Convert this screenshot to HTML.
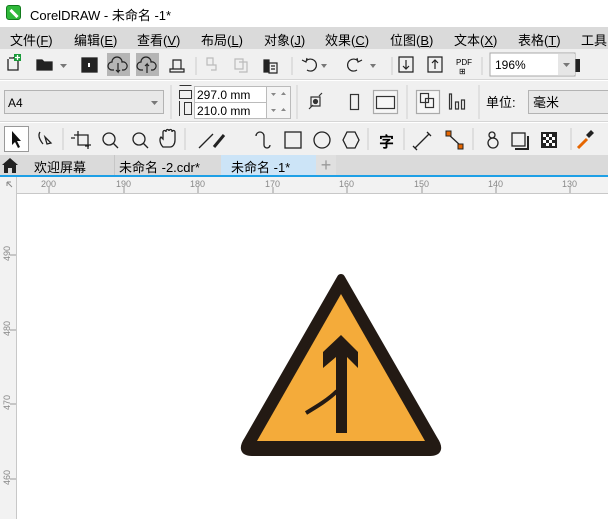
<!DOCTYPE html>
<html><head><meta charset="utf-8"><style>
*{margin:0;padding:0;box-sizing:border-box}
body{width:608px;height:519px;overflow:hidden;background:#fff;font-family:"Liberation Sans","Noto Sans CJK SC",sans-serif;position:relative;font-size:12px;color:#000}
.a{position:absolute}
.menu span{position:absolute;top:3px;font-size:13px}
.ic{position:absolute}
</style></head><body>
<!-- title -->
<div class="a" style="left:6px;top:5px;width:15px;height:15px;background:#2fb83a;border-radius:3px;border:1px solid #117a1c"></div>
<div class="a" style="left:9px;top:12px;width:10px;height:3px;background:#fff;transform:rotate(45deg)"></div>
<div class="a" style="left:30px;top:5px;font-size:13px">CorelDRAW - 未命名 -1*</div>
<!-- menu -->
<div class="a menu" style="left:0;top:27px;width:608px;height:22px;background:#dadada">
<span style="left:10px">文件(<u>F</u>)</span><span style="left:74px">编辑(<u>E</u>)</span><span style="left:137px">查看(<u>V</u>)</span><span style="left:201px">布局(<u>L</u>)</span><span style="left:264px">对象(<u>J</u>)</span><span style="left:325px">效果(<u>C</u>)</span><span style="left:390px">位图(<u>B</u>)</span><span style="left:454px">文本(<u>X</u>)</span><span style="left:518px">表格(<u>T</u>)</span><span style="left:581px">工具</span>
</div>
<!-- toolbar -->
<div class="a" style="left:0;top:49px;width:608px;height:31px;background:#f0f0f0;border-bottom:1px solid #d6d6d6"></div>
<svg class="a" style="left:0;top:49px" width="608" height="31">
<g fill="none" stroke="#222" stroke-width="1.3">
<path d="M9 9h5v-1M8 10v11h10v-10"/><rect x="14" y="5" width="7" height="7" fill="#1a9c3a" stroke="none"/><path d="M17.5 6v5M15 8.5h5" stroke="#fff"/>
<path d="M37 11h5l2 2h8v8H37z" fill="#222"/><path d="M60 15h7l-3.5 4z" fill="#777" stroke="none"/>
<rect x="82" y="9" width="15" height="14" fill="#222"/><rect x="88" y="14" width="2" height="4" fill="#fff" stroke="none"/>
</g>
<rect x="107" y="4" width="23" height="23" fill="#b5b5b5"/><rect x="136" y="4" width="23" height="23" fill="#b5b5b5"/>
<g fill="none" stroke="#222" stroke-width="1.2">
<path d="M114 21h-2a4 4 0 0 1 0-8 5 5 0 0 1 10 0 4 4 0 0 1 2 8h-2M118 14v9l-2-2M118 23l2-2"/>
<path d="M143 21h-2a4 4 0 0 1 0-8 5 5 0 0 1 10 0 4 4 0 0 1 2 8h-2M147 24v-9l-2 2M147 15l2 2"/>
<path d="M170 20h14v3h-14zM173 20v-9h8v9"/>
<g stroke="#bbb"><path d="M207 9h6v7h-6zM213 16h3v5h-5"/><path d="M235 10h8v10h-8zM239 13h8v10h-8"/></g>
<path d="M264 11h5v12h-5z" fill="#222"/><path d="M269 14h8v10h-8zM271 17h4M271 20h4"/>
<path d="M306 12a6 6 0 1 1 1 9M302 11l4 2 1-4"/><path d="M321 15h6l-3 4z" fill="#777" stroke="none"/>
<path d="M358 12a6 6 0 1 0-1 9M362 11l-4 2-1-4"/><path d="M370 15h6l-3 4z" fill="#777" stroke="none"/>
<path d="M399 8h14v15h-14zM406 11v9M403 17l3 3 3-3"/><path d="M428 8h14v15h-14zM435 20v-9M432 14l3-3 3 3"/>
<path d="M562 10h18v13h-18z" fill="#222" stroke="none"/>
</g>
<path d="M292 8v18M392 8v18M482 8v18M196 8v18" stroke="#ccc"/>
<text x="456" y="16" font-size="8" font-family="Liberation Sans">PDF</text><text x="459" y="25" font-size="8">⊞</text>
<rect x="490" y="4" width="85" height="23" fill="#fff" stroke="#a8a8a8"/><rect x="558" y="5" width="17" height="21" fill="#e6e6e6"/>
<path d="M563 14h7l-3.5 4z" fill="#777"/>
<text x="495" y="20" font-size="12" font-family="Liberation Sans">196%</text>
</svg>
<!-- property bar -->
<div class="a" style="left:0;top:81px;width:608px;height:41px;background:#f0f0f0;border-bottom:1px solid #d6d6d6"></div>
<svg class="a" style="left:0;top:81px" width="608" height="41">
<rect x="4.5" y="9.5" width="159" height="23" fill="#e8e8e8" stroke="#b3b3b3"/>
<path d="M151 20h7l-3.5 4z" fill="#777"/>
<text x="8" y="26" font-size="12" font-family="Liberation Sans">A4</text>
<path d="M171 4v34M297 4v34M407 4v34M479 4v34" stroke="#d0d0d0"/>
<g fill="none" stroke="#333"><path d="M179.5 4.5h12M179.5 9.5h12v8h-12zM179.5 17.5v-8"/><path d="M179.5 20v15M184.5 21.5h7v12h-7z"/></g>
<rect x="194.5" y="5.5" width="72" height="16" fill="#fff" stroke="#bbb"/><rect x="194.5" y="21.5" width="72" height="16" fill="#fff" stroke="#bbb"/>
<rect x="266.5" y="5.5" width="24" height="32" fill="#f5f5f5" stroke="#bbb"/>
<path d="M271 12h5l-2.5 3zM281 14h5l-2.5-3zM271 28h5l-2.5 3zM281 30h5l-2.5-3z" fill="#888"/>
<text x="197" y="18" font-size="12" font-family="Liberation Sans">297.0 mm</text>
<text x="197" y="34" font-size="12" font-family="Liberation Sans">210.0 mm</text>
<g fill="none" stroke="#333" stroke-width="1.2">
<path d="M311 16h9v9h-9zM309 28l4-4M322 12l-3 3"/><circle cx="315.5" cy="20.5" r="2" fill="#333"/>
<rect x="350.5" y="13.5" width="8" height="15"/>
<rect x="373.5" y="9.5" width="24" height="23" stroke="#aaa" fill="#f6f6f6"/><rect x="376.5" y="15.5" width="18" height="12"/>
<rect x="416.5" y="9.5" width="23" height="23" stroke="#aaa" fill="#f6f6f6"/><rect x="420.5" y="12.5" width="8" height="9"/><rect x="425.5" y="17.5" width="8" height="9"/>
<path d="M449.5 13v15h2v-15zM455.5 21v7h3v-7zM461.5 19v9h3v-9z"/>
</g>
<text x="486" y="26" font-size="13">单位:</text>
<rect x="528.5" y="9.5" width="85" height="23" fill="#e8e8e8" stroke="#b3b3b3"/>
<text x="533" y="26" font-size="13">毫米</text>
</svg>
<!-- toolbox -->
<div class="a" style="left:0;top:123px;width:608px;height:32px;background:#f0f0f0"></div>
<svg class="a" style="left:0;top:123px" width="608" height="32">
<rect x="4.5" y="3.5" width="24" height="25" fill="#fff" stroke="#999"/>
<path d="M12 8v14l3-3 3 6 2-1-3-6h4z" fill="#111"/>
<g fill="none" stroke="#222" stroke-width="1.3">
<path d="M40 9c-2 3-1 7 3 12M45 14l6 6-4 1z"/>
<path d="M78 8v14h13M74 12h14v14M71 15h4M85 23h4"/>
<circle cx="109" cy="16" r="6"/><path d="M113 20l5 5"/>
<circle cx="139" cy="16" r="6"/><path d="M143 20l5 5"/>
<path d="M163 24c-3-3-4-8-2-10l2 2v-7a1 1 0 0 1 3 0v-1a1 1 0 0 1 3 0a1 1 0 0 1 3 0v1a1 1 0 0 1 3 0v8c0 4-2 7-5 7z"/>
<path d="M199 25l14-14"/><path d="M214 24l10-12" stroke-width="3"/>
<path d="M256 13a4 4 0 0 1 8 0v9a3 3 0 0 0 6 0"/>
<rect x="285" y="9" width="16" height="16"/><circle cx="322" cy="17" r="8"/>
<path d="M343 17l4-8h8l4 8-4 8h-8z"/>
<path d="M415 25l14-14M413 23l4 4M427 9l4 4"/>
<path d="M448 11l13 12"/>
<circle cx="492" cy="12" r="3"/><circle cx="493" cy="20" r="5"/>
<rect x="512" y="10" width="13" height="13"/><path d="M515 26h13v-13" stroke-width="2"/>
</g>
<rect x="446" y="8" width="5" height="5" fill="#e66600" stroke="#222"/><rect x="458" y="21" width="5" height="5" fill="#e66600" stroke="#222"/>
<g><rect x="541" y="9" width="16" height="16" fill="#222"/>
<path d="M543 11h3v3h-3zM549 11h3v3h-3zM546 14h3v3h-3zM552 14h3v3h-3zM543 17h3v3h-3zM549 17h3v3h-3zM546 20h3v3h-3zM552 20h3v3h-3z" fill="#fff"/></g>
<path d="M578 25l9-9" stroke="#e66600" stroke-width="3"/><path d="M586 12l5-5 3 3-5 5z" fill="#222"/>
<text x="379" y="24" font-size="15" font-weight="bold">字</text>
<path d="M63 5v22M185 5v22M368 5v22M404 5v22M473 5v22M571 5v22" stroke="#ccc"/>
</svg>
<!-- tabs -->
<div class="a" style="left:0;top:155px;width:608px;height:20px;background:#dadada"></div>
<svg class="a" style="left:0;top:155px" width="30" height="20"><path d="M2 10l8-7 8 7h-2v8h-4v-5h-4v5H4v-8z" fill="#222"/></svg>
<div class="a" style="left:34px;top:157px;font-size:13px">欢迎屏幕</div>
<div class="a" style="left:114px;top:155px;width:107px;height:20px;border-left:1px solid #c6c6c6"></div>
<div class="a" style="left:119px;top:157px;font-size:13px">未命名 -2.cdr*</div>
<div class="a" style="left:221px;top:155px;width:95px;height:20px;background:#cce4f7"></div>
<div class="a" style="left:231px;top:157px;font-size:13px">未命名 -1*</div>
<div class="a" style="left:316px;top:155px;width:20px;height:20px;background:#e0e0e0;color:#999;font-size:18px;text-align:center;line-height:20px">+</div>
<div class="a" style="left:0;top:175px;width:608px;height:2px;background:#1ea0e6"></div>
<!-- rulers -->
<div class="a" style="left:0;top:177px;width:608px;height:17px;background:#f2f2f2"></div>
<div class="a" style="left:0;top:177px;width:17px;height:342px;background:#f2f2f2;border-right:1px solid #c8c8c8"></div>
<div class="a" style="left:17px;top:193px;width:591px;height:1px;background:#c8c8c8"></div>
<svg class="a" style="left:0;top:177px" width="608" height="342">
<g font-size="9" fill="#888" font-family="Liberation Sans">
<text x="41" y="10">200</text><text x="116" y="10">190</text><text x="190" y="10">180</text><text x="265" y="10">170</text><text x="339" y="10">160</text><text x="414" y="10">150</text><text x="488" y="10">140</text><text x="562" y="10">130</text>
<text transform="translate(10,84) rotate(-90)">490</text><text transform="translate(10,159) rotate(-90)">480</text><text transform="translate(10,233) rotate(-90)">470</text><text transform="translate(10,308) rotate(-90)">460</text>
</g>
<g stroke="#999"><path d="M49 10v6M124 10v6M198 10v6M273 10v6M347 10v6M422 10v6M496 10v6M570 10v6M10 78h6M10 153h6M10 227h6M10 302h6"/></g>
<path d="M7 5h4M7 5v4M7 5l5 5" stroke="#888" fill="none"/>
</svg>
<!-- sign -->
<svg class="a" style="left:0;top:0" width="608" height="519">
<path d="M341 278 L248 440 Q240 452 252 452 L430 452 Q442 452 434 440 Z" fill="#231a14" stroke="#231a14" stroke-width="8" stroke-linejoin="round"/>
<path d="M341 294 L257 441 L425 441 Z" fill="#f4ab3a"/>
<path d="M341 335 L358 352 L358 368 L347 357 L347 433 L336 433 L336 357 L323 368 L323 352 Z" fill="#231a14"/>
<path d="M306 413c10-6 22-13 31-22" stroke="#231a14" stroke-width="4" fill="none"/>
</svg>
</body></html>
